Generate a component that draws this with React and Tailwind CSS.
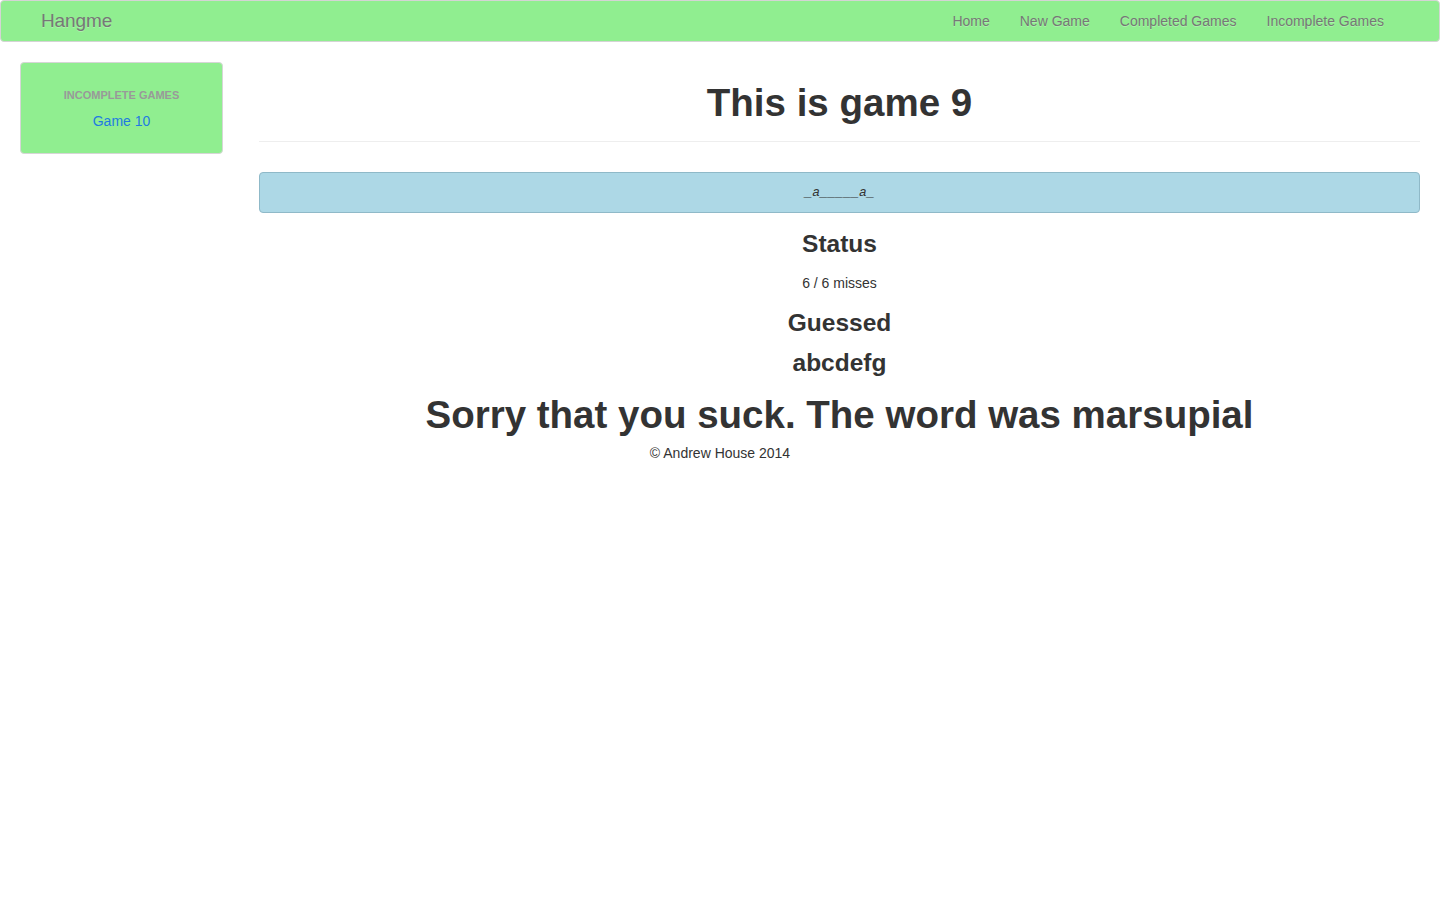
export default function App() {
  const shadow = { textShadow: "0 1px 0 rgba(255,255,255,0.25)" };
  return (
    <div className="min-h-[900px] bg-white text-[#333] text-[14px] leading-[20px]" style={{ fontFamily: '"Liberation Sans", Arial, sans-serif' }}>
      <nav className="h-[42px] bg-[#90ee90] border border-[#d4d4d4] rounded-[4px] flex items-center pl-[25px] pr-[40px]">
        <a className="px-[15px] text-[19px] text-[#777] leading-[20px] tracking-[-0.1px]" style={shadow}>Hangme</a>
        <ul className="ml-auto flex items-center">
          {["Home", "New Game", "Completed Games", "Incomplete Games"].map((t) => (
            <li key={t} className="px-[15px] text-[14px] text-[#777]" style={shadow}>{t}</li>
          ))}
        </ul>
      </nav>
      <div className="flex px-[20px] pt-[20px]">
        <div className="w-[203px] shrink-0">
          <div className="h-[92px] bg-[#90ee90] border border-[#d6d6d6] rounded-[4px] flex flex-col items-center pt-[24px]">
            <div className="text-[11px] leading-[16px] font-bold text-[#999] uppercase">Incomplete Games</div>
            <a className="mt-[8px] text-[14px] leading-[20px] text-[#1f7be0]">Game 10</a>
          </div>
        </div>
        <div className="flex-1 ml-[36px] flex flex-col">
          <div className="border-b border-[#eee] pb-[18px]">
            <h1 className="mt-[21px] h-[40px] text-center text-[38.5px] leading-[40px] font-bold">This is game 9</h1>
          </div>
          <div className="mt-[30px] h-[41px] bg-[#add8e6] border border-[#8fb9c8] rounded-[4px] flex items-center justify-center">
            <span className="text-[13px] italic" style={{ fontFamily: '"Liberation Mono", "DejaVu Sans Mono", monospace' }}>_a_____a_</span>
          </div>
          <h3 className="mt-[18px] h-[26px] text-center text-[24.5px] leading-[26px] font-bold">Status</h3>
          <p className="mt-[16px] text-center text-[14px] leading-[20px]">6 / 6 misses</p>
          <h3 className="mt-[17px] h-[26px] text-center text-[24.5px] leading-[26px] font-bold">Guessed</h3>
          <h3 className="mt-[14px] h-[26px] text-center text-[24.5px] leading-[26px] font-bold">abcdefg</h3>
          <h1 className="mt-[19px] h-[40px] text-center text-[38.5px] leading-[40px] font-bold">Sorry that you suck. The word was marsupial</h1>
        </div>
      </div>
      <footer className="mt-[8px] text-center text-[14px] leading-[20px]">© Andrew House 2014</footer>
    </div>
  );
}
